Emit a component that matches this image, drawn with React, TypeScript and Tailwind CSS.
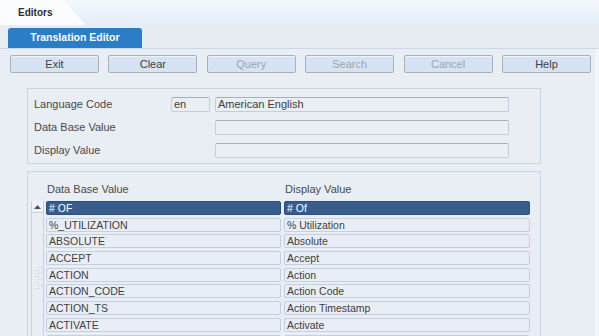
import React from "react";

const rows: [string, string][] = [
  ["# OF", "# Of"],
  ["%_UTILIZATION", "% Utilization"],
  ["ABSOLUTE", "Absolute"],
  ["ACCEPT", "Accept"],
  ["ACTION", "Action"],
  ["ACTION_CODE", "Action Code"],
  ["ACTION_TS", "Action Timestamp"],
  ["ACTIVATE", "Activate"],
  ["", ""],
];

const buttons: [string, boolean][] = [
  ["Exit", true],
  ["Clear", true],
  ["Query", false],
  ["Search", false],
  ["Cancel", false],
  ["Help", true],
];

function Btn({ label, enabled }: { label: string; enabled: boolean }) {
  return (
    <div
      className={`w-[89px] h-[18px] flex items-center justify-center rounded-[2px] border border-[#a9b1ba] bg-[#d5e3f2] shadow-[inset_0_1px_0_#eef4fa] text-[11px] ${
        enabled ? "text-[#404040]" : "text-[#a0a4a8]"
      }`}
    >
      {label}
    </div>
  );
}

function Field({ w, value }: { w: string; value?: string }) {
  return (
    <div
      className={`${w} h-[15px] rounded-[2px] border border-[#c3cddb] border-t-[#a9b0ba] bg-[#eaeef5] text-[11px] leading-[13px] pl-[2px] text-[#404040]`}
    >
      {value}
    </div>
  );
}

export default function App() {
  return (
    <div
      className="w-[599px] h-[336px] overflow-hidden bg-[#e9edf4] relative"
      style={{ fontFamily: '"Liberation Sans", Arial, sans-serif' }}
    >
      {/* top strip */}
      <div className="h-[25px] bg-gradient-to-b from-[#f4f8fd] to-[#e3edf8] relative">
        <div className="absolute left-0 top-0 h-[25px] w-[86px] bg-[#fbfcfe] [clip-path:polygon(0_0,64px_0,86px_25px,0_25px)]" />
        <div className="absolute left-[18px] top-[5px] text-[10px] font-bold text-[#2e2e2e]">Editors</div>
      </div>
      {/* tab bar */}
      <div className="h-[24px] px-[8px] pt-[2px] border-b border-[#c9d8ea] bg-[#e8ecf3] flex items-end">
        <div className="w-[134px] h-[20px] rounded-t-[3px] bg-[#2b7dc6] text-white font-bold text-[10.5px] flex items-center justify-center">
          Translation Editor
        </div>
      </div>
      {/* buttons */}
      <div className="flex justify-between pl-[10px] pr-[8px] mt-[6px]">
        {buttons.map(([l, e]) => (
          <Btn key={l} label={l} enabled={e} />
        ))}
      </div>

      {/* panel 1 */}
      <div className="ml-[27px] mt-[15px] w-[514px] h-[76px] border border-[#cad5e4] pt-[8px] pl-[6px] flex flex-col gap-[8px] text-[11px] text-[#4a4a4a]">
        <div className="flex items-center h-[15px]">
          <div className="w-[137px]">Language Code</div>
          <Field w="w-[39px]" value="en" />
          <div className="w-[5px]" />
          <Field w="w-[294px]" value="American English" />
        </div>
        <div className="flex items-center h-[15px]">
          <div className="w-[181px]">Data Base Value</div>
          <Field w="w-[294px]" />
        </div>
        <div className="flex items-center h-[15px]">
          <div className="w-[181px]">Display Value</div>
          <Field w="w-[294px]" />
        </div>
      </div>

      {/* panel 2 */}
      <div className="ml-[27px] mt-[7px] w-[514px] h-[200px] border border-[#cad5e4] relative">
        <div className="flex h-[29px] items-end pb-[4px] text-[11px] text-[#4a4a4a]">
          <div className="ml-[19px] w-[238px]">Data Base Value</div>
          <div>Display Value</div>
        </div>
        <div className="flex">
          {/* scrollbar */}
          <div className="ml-[3px] w-[13px] h-[200px] border-l border-r border-[#c8d2e0] flex flex-col items-center">
            <div className="w-[11px] h-[12px] bg-[#eef2f8] border-b border-[#c8d2e0] flex items-center justify-center">
              <svg width="7" height="4" viewBox="0 0 7 4">
                <path d="M0 4 L3.5 0 L7 4 Z" fill="#4a5568" />
              </svg>
            </div>
            <div className="mt-[54px] flex flex-col gap-[2px] items-start pl-[1px]">
              {Array.from({ length: 8 }).map((_, i) => (
                <div key={i} className="flex gap-[2px]">
                  <div className={`w-[1px] h-[1px] ${i % 2 ? "bg-[#b8c0cc]" : "bg-transparent"}`} />
                  <div className="w-[1px] h-[1px] bg-[#b8c0cc]" />
                  <div className={`w-[1px] h-[1px] ${i % 2 ? "bg-transparent" : "bg-[#b8c0cc]"}`} />
                </div>
              ))}
            </div>
          </div>
          <div className="ml-[2px] flex flex-col gap-[2.7px]">
            {rows.map(([a, b], i) => (
              <div key={i} className="flex gap-[3px] text-[10.5px]">
                <div
                  className={`w-[235px] h-[14px] leading-[13px] pl-[2px] rounded-[2px] border ${
                    i === 0
                      ? "bg-[#385d8c] border-[#2d4f7c] text-white"
                      : "bg-[#e9eef6] border-[#c3d0e2] text-[#404040]"
                  }`}
                >
                  {a}
                </div>
                <div
                  className={`w-[246px] h-[14px] leading-[13px] pl-[2px] rounded-[2px] border ${
                    i === 0
                      ? "bg-[#385d8c] border-[#2d4f7c] text-white"
                      : "bg-[#e9eef6] border-[#c3d0e2] text-[#404040]"
                  }`}
                >
                  {b}
                </div>
              </div>
            ))}
          </div>
        </div>
      </div>
      <div className="absolute right-0 top-[49px] w-[4px] h-[287px] bg-[#f2f5f9]" />
    </div>
  );
}
